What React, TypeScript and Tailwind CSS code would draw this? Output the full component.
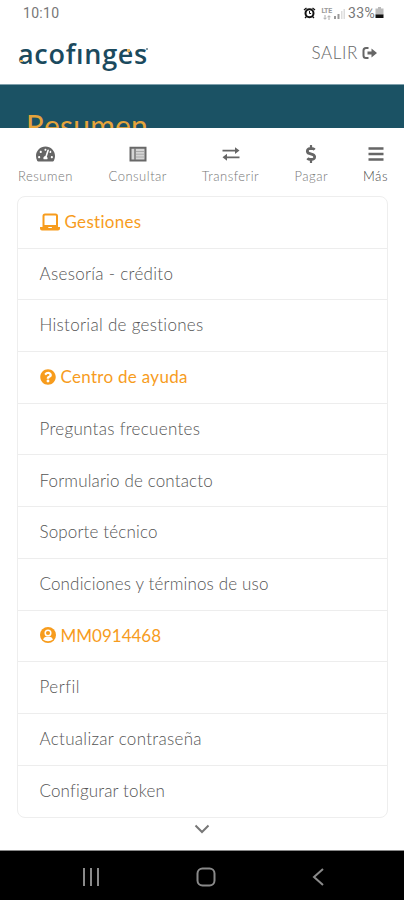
import React from 'react';
import { FaTachometerAlt, FaQuestionCircle, FaDollarSign } from 'react-icons/fa';

interface MenuItem {
  label: string;
  spacing: string;
  icon?: React.ReactNode;
}

const LaptopIcon = () => (
  <svg className="mr-[5px] h-[18px] w-[20px]" viewBox="0 0 20 18">
    <path d="M3.500 13V3Q3.500 1.500 5 1.500h10.500Q17 1.500 17 3v10z" fill="none" stroke="currentColor" strokeWidth="2" />
    <path d="M0 14h8l.6 1h3l.6-1H20v1.500Q20 17.500 18 17.500H2Q0 17.500 0 15.500z" fill="currentColor" />
  </svg>
);

const UserIcon = () => (
  <svg className="mr-[5px] h-[16px] w-[16px]" viewBox="0 0 16 16">
    <circle cx="8" cy="8" r="8" fill="currentColor" />
    <circle cx="8" cy="6" r="2.800" fill="none" stroke="#fff" strokeWidth="1.500" />
    <path d="M3 12.500Q4 9.800 6.200 9.800h3.600Q12 9.800 13 12.500 11 14.200 8 14.200T3 12.500z" fill="#fff" />
  </svg>
);

const menuItems: MenuItem[] = [
  { label: 'Gestiones', spacing: 'tracking-[0.300px]', icon: <LaptopIcon /> },
  { label: 'Asesoría - crédito', spacing: 'tracking-[0.300px]' },
  { label: 'Historial de gestiones', spacing: 'tracking-[0.300px]' },
  { label: 'Centro de ayuda', spacing: 'tracking-[0.300px]', icon: <FaQuestionCircle className="h-4 w-4 mr-[5px]" /> },
  { label: 'Preguntas frecuentes', spacing: 'tracking-[0.300px]' },
  { label: 'Formulario de contacto', spacing: 'tracking-[0.150px]' },
  { label: 'Soporte técnico', spacing: 'tracking-[0.150px]' },
  { label: 'Condiciones y términos de uso', spacing: 'tracking-[0.150px]' },
  { label: 'MM0914468', spacing: 'tracking-[0px]', icon: <UserIcon /> },
  { label: 'Perfil', spacing: 'tracking-[0.500px]' },
  { label: 'Actualizar contraseña', spacing: 'tracking-[0.300px]' },
  { label: 'Configurar token', spacing: 'tracking-[0.150px]' },
];

const StatusBar: React.FC = () => (
  <div className="flex h-[26px] items-center justify-between pl-[23px] pr-[20px] font-[Roboto] text-[14px] text-[#777]">
    <span className="tracking-[0.3px]">10:10</span>
    <div className="flex items-center">
      <svg className="h-[12px] w-[13px]" viewBox="0 0 13 12" fill="none" stroke="#111">
        <circle cx="6.5" cy="6.3" r="4" strokeWidth="2" />
        <path d="M1 3 3.5 1M12 3 9.5 1M2 11l1.5-1.5M11 11 9.5 9.5" strokeWidth="1.3" />
        <path d="M6.5 4v2.5h1.6" />
      </svg>
      <div className="ml-[4px] flex w-[13px] flex-col items-center text-[#999]">
        <span className="text-[7px] font-bold leading-[8px] tracking-[-0.3px]">LTE</span>
        <svg className="h-[5px] w-[8px]" viewBox="0 0 8 5" fill="none" stroke="#aaa">
          <path d="M2 0v4M.5 2.800 2 4.300l1.500-1.500M6 5V1M4.500 2.200 6 .7l1.500 1.500" />
        </svg>
      </div>
      <svg className="ml-[1px] h-[11px] w-[11px]" viewBox="0 0 11 11">
        <path d="M0 8h2v3H0zM3.500 6h2v5h-2z" fill="#999" />
        <path d="M7 3h1.500v8H7zM9.500 1H11v10H9.500z" fill="#ddd" />
      </svg>
      <span className="ml-[3px] tracking-[0.3px]">33%</span>
      <svg className="h-[12px] w-[9px]" viewBox="0 0 9 12">
        <path d="M3 0h3v1.5h2.5V8h-8V1.500H3z" fill="#bbb" />
        <path d="M.5 7.500h8V11h-8z" fill="#111" />
      </svg>
    </div>
  </div>
);

const Header: React.FC = () => (
  <header className="flex h-[58px] items-center justify-between pl-[18px] pr-[26px] pb-[4px]">
    <div className="relative font-['Open_Sans'] text-[27px] font-semibold leading-none tracking-[0.700px] text-[#1b4a5e]">
      acofınges
      <span className="absolute left-[2px] top-[20px] h-[2px] w-[3px] bg-[#e9b45c]" />
      <span className="absolute left-[109px] top-[9px] h-[3px] w-[3px] bg-[#e9b45c]" />
      <span className="absolute left-[128px] top-[8px] h-[2px] w-[2px] bg-[#8b9da5]" />
    </div>
    <button className="flex items-center text-[17px] font-light tracking-[0.600px] text-[#666]">
      SALIR
      <svg className="ml-[4px] h-[12px] w-[16px]" viewBox="0 0 15 12">
        <path d="M6 1H3.500Q1 1 1 3.500v5Q1 11 3.500 11H6" fill="none" stroke="#666" strokeWidth="2" />
        <path d="M5 4.500h4V1.500L14.500 6 9 10.500v-3H5z" fill="#666" />
      </svg>
    </button>
  </header>
);

const TabBar: React.FC = () => (
  <nav className="flex h-[68px] items-start justify-between pl-[17px] pr-[16px] pt-[17px] text-[13px] font-light tracking-[0.500px] text-[#777]">
    <div className="flex w-[57px] flex-col items-center">
      <FaTachometerAlt className="h-[18px] w-[19px] text-[#666]" />
      <span className="mt-[4px] leading-[18px]">Resumen</span>
    </div>
    <div className="flex w-[59px] flex-col items-center">
      <svg className="h-[18px] w-[18px]" viewBox="0 0 18 18">
        <path d="M1.500 2.800h15v12.600h-15z" fill="#d5d5d5" stroke="#686868" strokeWidth="2" />
        <path d="M6 3v12" stroke="#777" strokeWidth="1.500" />
        <path d="M7 6.500h8M7 9.200h8M7 12h8" stroke="#aaa" />
      </svg>
      <span className="mt-[4px] leading-[18px]">Consultar</span>
    </div>
    <div className="flex w-[58px] flex-col items-center">
      <svg className="h-[18px] w-[18px]" viewBox="0 0 18 18" fill="#666">
        <path d="M.5 4.800h12.500V2.200L17.500 5.600 13 9V6.600H.5zM17.500 11.400H5V8.800L.5 12.300 5 15.700v-2.500h12.500z" />
      </svg>
      <span className="mt-[4px] leading-[18px]">Transferir</span>
    </div>
    <div className="flex w-[35px] flex-col items-center">
      <FaDollarSign className="h-[18px] w-[18px] text-[#666]" />
      <span className="mt-[4px] leading-[18px]">Pagar</span>
    </div>
    <div className="flex w-[25px] flex-col items-center text-[#444]">
      <svg className="h-[18px] w-[16px]" viewBox="0 0 16 18" stroke="#666" strokeWidth="2.300">
        <path d="M.5 3.500h15M.5 9h15M.5 14.500h15" />
      </svg>
      <span className="mt-[4px] leading-[18px]">Más</span>
    </div>
  </nav>
);

const AndroidNav: React.FC = () => (
  <div className="flex h-[50px] shrink-0 items-center justify-between border-t border-[#888] bg-black pl-[82px] pr-[80px] pt-[2px]">
    <svg className="h-[18px] w-[18px]" viewBox="0 0 18 18" stroke="#8a8a8a" strokeWidth="2">
      <path d="M2 0v18M9 0v18M16 0v18" />
    </svg>
    <svg className="h-[20px] w-[20px]" viewBox="0 0 20 20" fill="none" stroke="#8a8a8a" strokeWidth="2">
      <rect x="1.500" y="1.500" width="17" height="17" rx="5" />
    </svg>
    <svg className="h-[18px] w-[12px]" viewBox="0 0 12 18" fill="none" stroke="#8a8a8a" strokeWidth="2">
      <path d="M11 1 2 9l9 8" />
    </svg>
  </div>
);

const App: React.FC = () => {
  return (
    <div className="flex h-[900px] w-[404px] flex-col overflow-hidden bg-white font-[Lato,sans-serif]">
      <StatusBar />
      <Header />

      <div className="h-[44px] overflow-hidden border-t border-[#7fa0ac] bg-[#1b5264] pl-[26px] pt-[22px]">
        <h1 className="text-[30px] leading-[36px] tracking-[0.2px] text-[#e5a43b]">Resumen</h1>
      </div>

      <TabBar />

      <ul className="mx-[16.500px] h-[622px] shrink-0 overflow-hidden rounded-[8px] border-[1.500px] border-[#eeeeee]">
        {menuItems.map((item) => (
          <li
            key={item.label}
            className={`flex h-[51.700px] items-center border-b-[1.500px] border-[#ededed] pb-px pl-[22px] text-[17px] last:border-b-0 ${item.spacing} ${item.icon ? 'text-[#f79c1d]' : 'font-light text-[#555]'}`}
          >
            {item.icon}
            {item.label}
          </li>
        ))}
      </ul>

      <div className="flex h-[32px] shrink-0 justify-center pt-[6px]">
        <svg className="h-[10px] w-[16px]" viewBox="0 0 16 10" fill="none" stroke="#777" strokeWidth="2">
          <path d="M1.500 1.500 8 8l6.500-6.500" />
        </svg>
      </div>

      <AndroidNav />
    </div>
  );
};

export default App;
